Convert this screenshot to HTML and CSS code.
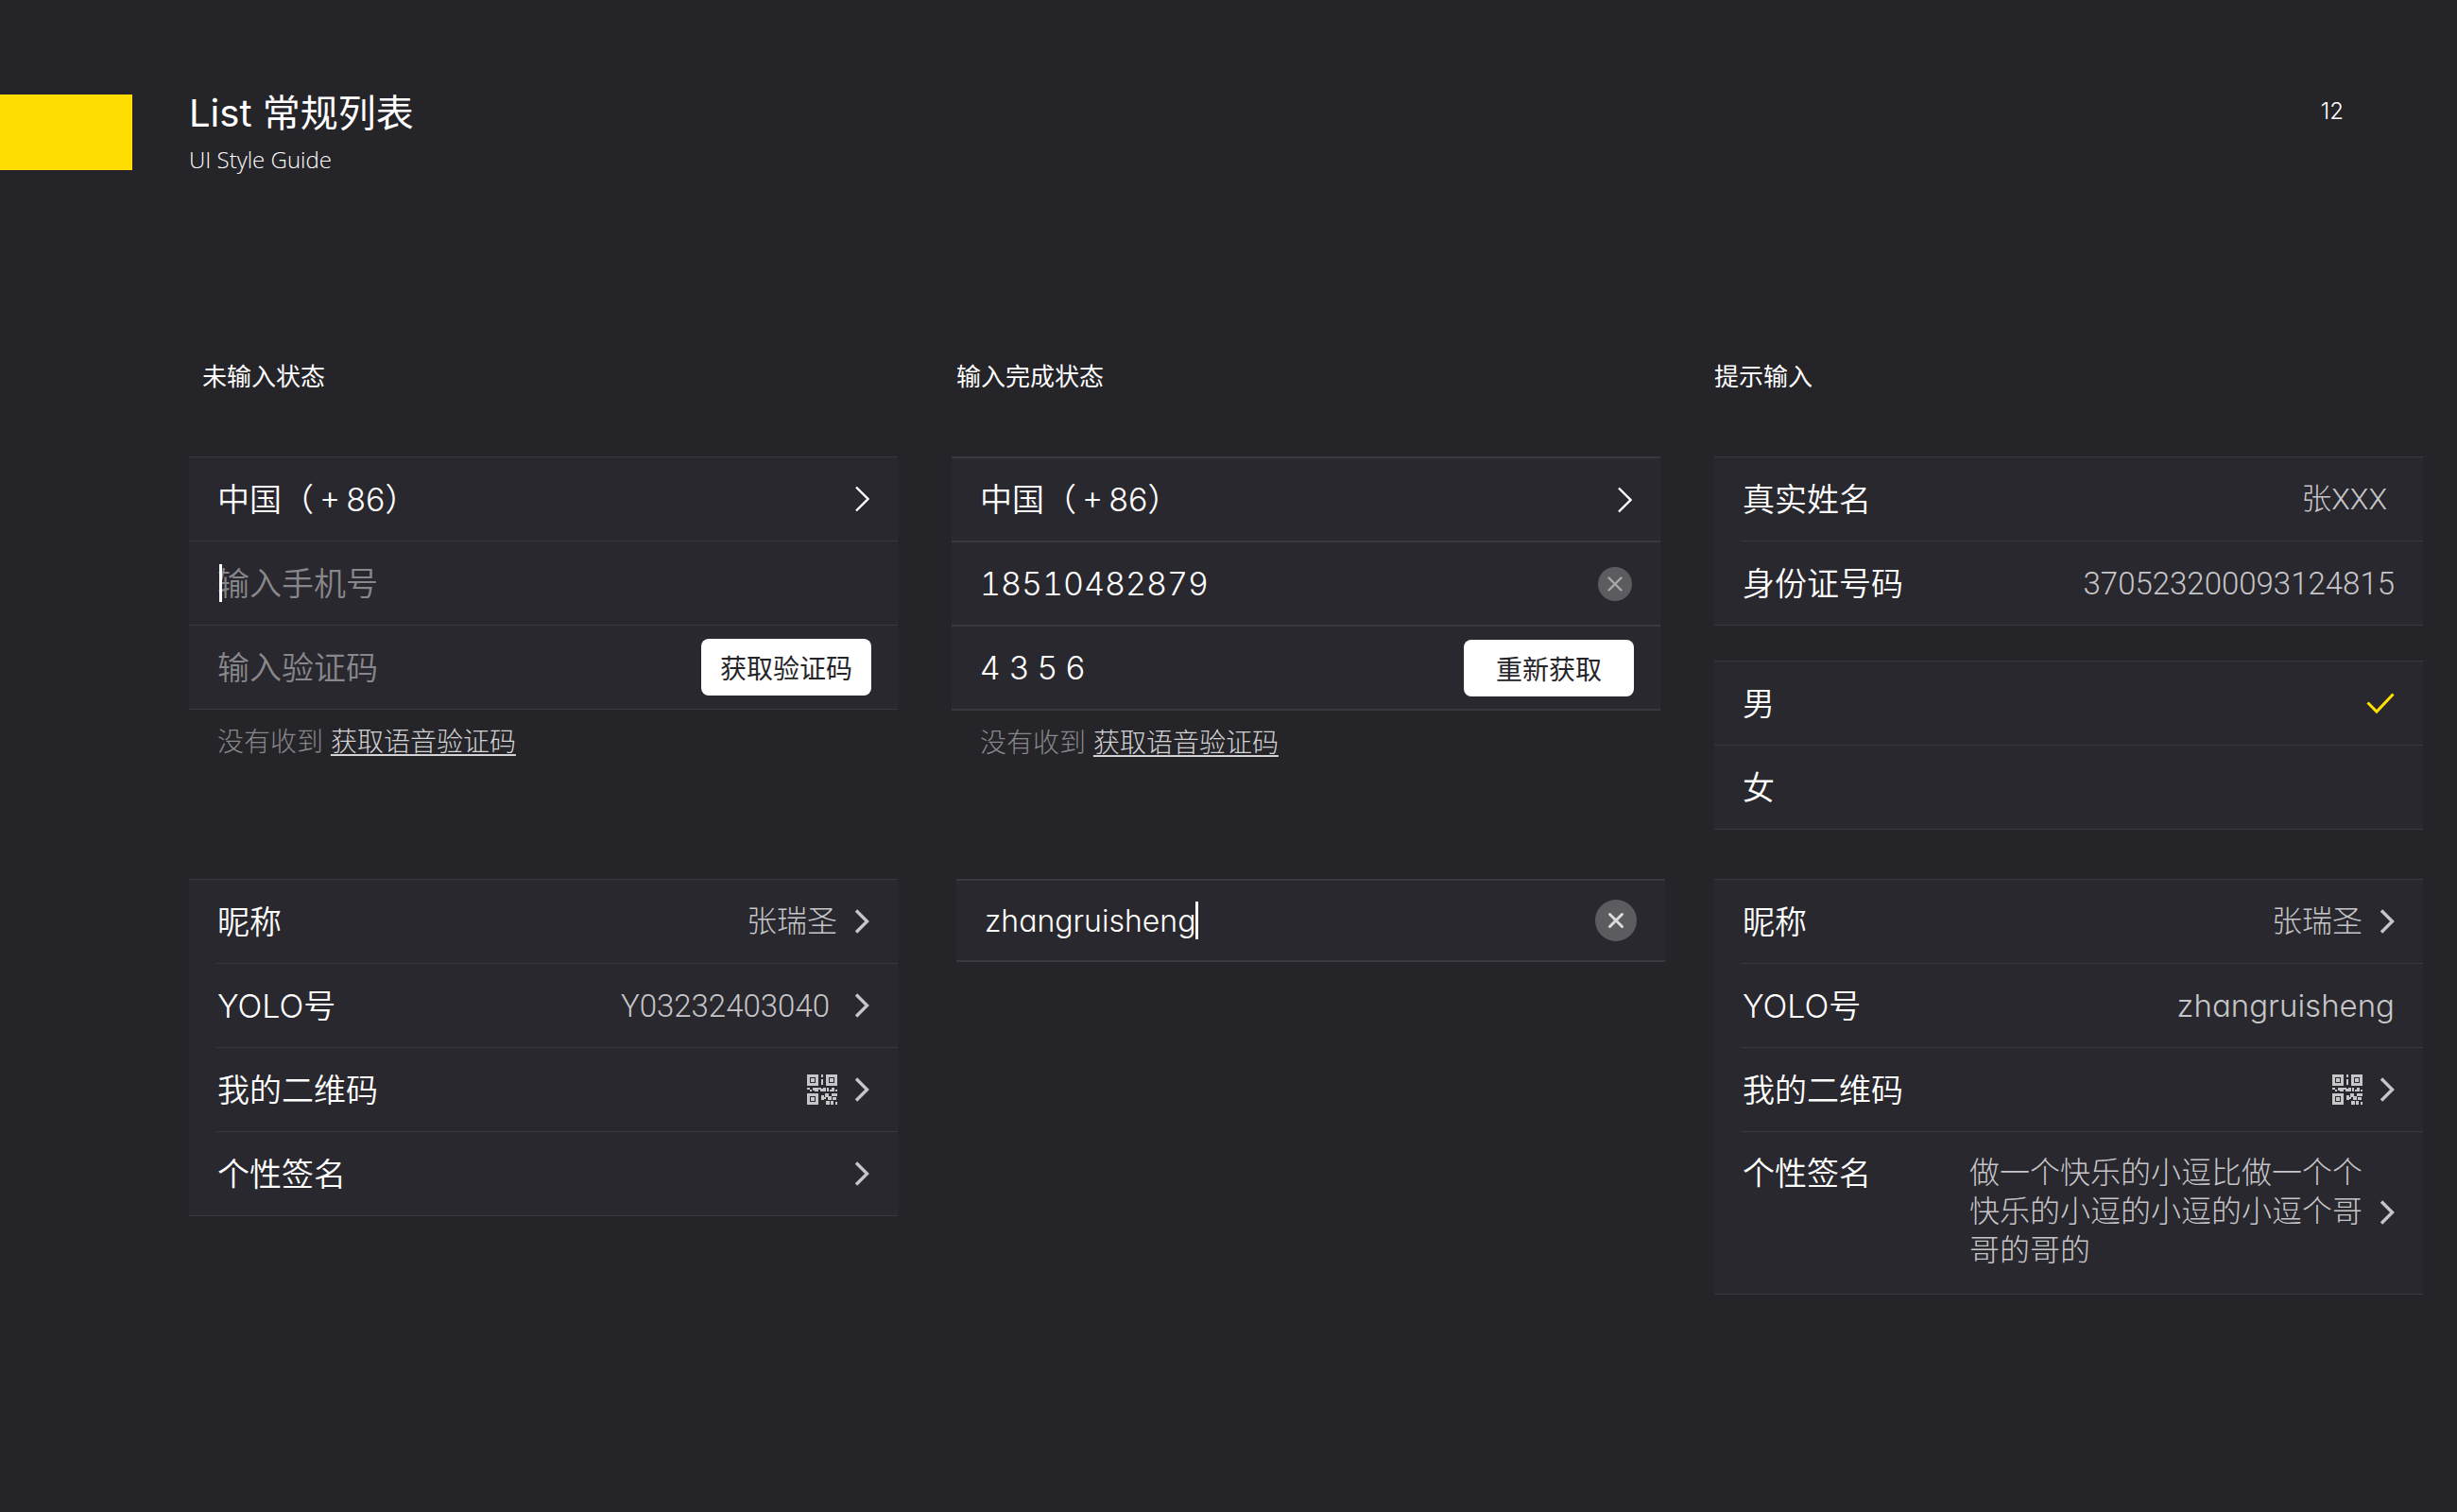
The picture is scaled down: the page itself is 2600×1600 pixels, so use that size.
FILE: index.html
```html
<!DOCTYPE html>
<html lang="zh-CN">
<head>
<meta charset="utf-8">
<meta name="viewport" content="width=device-width, initial-scale=1">
<title>List 常规列表</title>
<link rel="stylesheet" href="styles.css">
</head>
<body>
<svg class="defs" aria-hidden="true">
  <symbol id="chevron-thin" viewBox="0 0 16 28"><path d="M2 1.5 14.5 14 2 26.5" fill="none" stroke="currentColor" stroke-width="2.4"/></symbol>
  <symbol id="chevron" viewBox="0 0 16 28"><path d="M2 2.5 13.5 14 2 25.5" fill="none" stroke="currentColor" stroke-width="3.4"/></symbol>
  <symbol id="check" viewBox="0 0 30 28"><path d="M1.500 13.500 11 23 28.500 4.500" fill="none" stroke="currentColor" stroke-width="3"/></symbol>
  <symbol id="qr" viewBox="0 0 32 32">
    <path fill="currentColor" fill-rule="evenodd" d="M0 0h12v12H0zM3 3v6h6V3zM20 0h12v12H20zM23 3v6h6V3zM0 20h12v12H0zM3 23v6h6v-6z"/>
    <path fill="currentColor" d="M4 4h4v4H4zM24 4h4v4h-4zM4 24h4v4H4zM15 0h2v3h-2zM15 5h2v6h-2zM0 14h3v2H0zM3 16h2v2H3zM6 14h3v3H6zM8 14h4v4H8zM12 14h3v2h-3zM14 15h3v3h-3zM17 14h3v4h-3zM21 14h2v4h-2zM24 16h4v2h-4zM26 14h3v4h-3zM30 16h2v2h-2zM15 22h3v5h-3zM19 20h4v4h-4zM26 20h6v3h-6zM17 24h3v2h-3zM22 23h4v4h-4zM27 24h4v3h-4zM20 28h4v4h-4zM25 28h3v4h-3zM30 29h2v3h-2z"/>
  </symbol>
</svg>

<header class="page-header">
  <span class="mark"></span>
  <div class="titles">
    <h1>List 常规列表</h1>
    <p>UI Style Guide</p>
  </div>
  <span class="page-number">12</span>
</header>

<main class="board">
  <h2 class="heading-indent">未输入状态</h2>
  <h2 class="shifted">输入完成状态</h2>
  <h2>提示输入</h2>

  <section>
    <div class="list">
      <button class="row" type="button"><span class="label">中国（<span class="plus">+</span>86）</span><svg class="chevron bright"><use href="#chevron-thin"/></svg></button>
      <div class="row field"><span class="caret caret-start"></span><input type="tel" placeholder="输入手机号" aria-label="手机号"></div>
      <div class="row with-action"><input type="text" placeholder="输入验证码" aria-label="验证码"><button class="action" type="button">获取验证码</button></div>
    </div>
    <p class="hint">没有收到 <a href="#voice">获取语音验证码</a></p>
  </section>

  <section>
    <div class="list strong">
      <button class="row" type="button"><span class="label">中国（<span class="plus">+</span>86）</span><svg class="chevron bright"><use href="#chevron-thin"/></svg></button>
      <div class="row"><input class="phone" type="tel" value="18510482879" aria-label="手机号"><button class="clear" type="button" aria-label="清除"><svg viewBox="0 0 36 36"><circle cx="18" cy="18" r="18" fill="#5c5b60"/><path d="M11.500 11.500l13 13m0-13l-13 13" stroke="#a9a9ab" stroke-width="2.4" stroke-linecap="round" fill="none"/></svg></button></div>
      <div class="row with-action"><input type="text" value="4 3 5 6" aria-label="验证码"><button class="action" type="button">重新获取</button></div>
    </div>
    <p class="hint">没有收到 <a href="#voice-again">获取语音验证码</a></p>
  </section>

  <section class="stack">
    <dl class="list inset">
      <div class="row"><dt class="label">真实姓名</dt><dd class="value name">张XXX</dd></div>
      <div class="row"><dt class="label">身份证号码</dt><dd class="value digits">370523200093124815</dd></div>
    </dl>
    <div class="list" role="radiogroup" aria-label="性别">
      <label class="row"><span class="label">男</span><input class="choice" type="radio" name="gender" checked><svg class="check"><use href="#check"/></svg></label>
      <label class="row"><span class="label">女</span><input class="choice" type="radio" name="gender"><svg class="check"><use href="#check"/></svg></label>
    </div>
  </section>

  <section>
    <div class="list inset">
      <button class="row" type="button"><span class="label">昵称</span><span class="value">张瑞圣</span><svg class="chevron"><use href="#chevron"/></svg></button>
      <button class="row" type="button"><span class="label">YOLO号</span><span class="value digits code">Y03232403040</span><svg class="chevron"><use href="#chevron"/></svg></button>
      <button class="row" type="button"><span class="label">我的二维码</span><svg class="qr"><use href="#qr"/></svg><svg class="chevron"><use href="#chevron"/></svg></button>
      <button class="row" type="button"><span class="label">个性签名</span><svg class="chevron"><use href="#chevron"/></svg></button>
    </div>
  </section>

  <section>
    <div class="list strong compact shifted">
      <div class="row"><input class="nickname" type="text" value="zhangruisheng" aria-label="YOLO号"><span class="caret"></span><button class="clear large" type="button" aria-label="清除"><svg viewBox="0 0 44 44"><circle cx="22" cy="22" r="22" fill="#5c5b60"/><path d="M15.500 15.500l13 13m0-13l-13 13" stroke="#dcdcdd" stroke-width="3" stroke-linecap="round" fill="none"/></svg></button></div>
    </div>
  </section>

  <section>
    <div class="list inset">
      <button class="row" type="button"><span class="label">昵称</span><span class="value">张瑞圣</span><svg class="chevron"><use href="#chevron"/></svg></button>
      <div class="row"><span class="label">YOLO号</span><span class="value digits latin">zhangruisheng</span></div>
      <button class="row" type="button"><span class="label">我的二维码</span><svg class="qr"><use href="#qr"/></svg><svg class="chevron"><use href="#chevron"/></svg></button>
      <button class="row tall" type="button"><span class="label">个性签名</span><span class="value bio">做一个快乐的小逗比做一个个快乐的小逗的小逗的小逗个哥哥的哥的</span><svg class="chevron"><use href="#chevron"/></svg></button>
    </div>
  </section>
</main>
</body>
</html>
```
FILE: styles.css
```css
* {
  box-sizing: border-box;
}

:root {
  --bg: #252429;
  --panel: #29282e;
  --line: #3a393f;
  --text: #ffffff;
  --muted: #c6c6c8;
  --faint: #88878b;
  --sans: Inter, "Noto Sans CJK SC", sans-serif;
}

body {
  margin: 0;
  min-height: 100vh;
  background: var(--bg);
  color: var(--text);
  font-family: var(--sans);
  font-weight: 350;
  font-feature-settings: "cv11", "case";
}

h1, h2, p, dl, dd {
  margin: 0;
  font-weight: inherit;
}

button, input {
  margin: 0;
  padding: 0;
  border: 0;
  background: none;
  color: inherit;
  font: inherit;
  font-feature-settings: inherit;
  text-align: left;
  outline: 0;
}

.defs {
  position: absolute;
  width: 0;
  height: 0;
}

.page-header {
  display: flex;
  align-items: flex-start;
  gap: 60px;
  padding: 100px 120px 0 0;
}

.mark {
  width: 140px;
  height: 80px;
  background: #ffdd00;
}

.titles {
  flex: 1;
}

h1 {
  font-size: 40px;
  font-weight: 400;
  line-height: 40px;
}

.titles p {
  margin-top: 11px;
  font-family: "Open Sans", sans-serif;
  font-size: 24px;
  font-weight: 300;
  line-height: 36px;
}

.page-number {
  font-size: 24px;
  line-height: 36px;
}

.board {
  display: grid;
  grid-template-columns: repeat(3, minmax(0, 1fr));
  column-gap: 57px;
  padding: 194px 36px 100px 200px;
}

h2 {
  margin-bottom: 66px;
  font-size: 26px;
  font-weight: 400;
  line-height: 36px;
}

.heading-indent {
  padding-left: 14px;
}

.shifted {
  margin-left: 5px;
  margin-right: -5px;
}

section {
  margin-bottom: 52px;
}

.stack {
  display: flex;
  flex-direction: column;
  gap: 37px;
}

.list {
  border-top: 1px solid var(--line);
  background: var(--panel);
  font-size: 34px;
}

.row {
  position: relative;
  display: flex;
  align-items: center;
  width: 100%;
  min-height: 89px;
  padding: 0 30px;
  border-bottom: 1px solid var(--line);
}

.strong,
.strong .row {
  border-width: 2px;
  border-left: 0;
  border-right: 0;
}

.strong .row {
  border-top: 0;
}

.compact .row {
  min-height: 86px;
}

/* Dividers between rows start at the text edge */
.inset .row:not(:last-child) {
  border-image: linear-gradient(to right, transparent 30px, var(--line) 30px) 1;
}

.label {
  flex: 1;
  line-height: 41px;
}

.plus {
  margin: 0 6px;
}

.row input:not(.choice) {
  flex: 1;
  min-width: 0;
  height: 60px;
}

.phone {
  font-variant-numeric: tabular-nums;
}

input::placeholder {
  color: var(--faint);
  opacity: 1;
}

.caret {
  width: 3px;
  height: 40px;
  background: var(--text);
}

.caret-start {
  position: absolute;
  left: 32px;
  top: 24px;
}

.row .nickname.nickname {
  flex: none;
  width: auto;
  field-sizing: content;
  font-size: 32px;
}

.chevron {
  width: 16px;
  height: 28px;
  margin-left: 18px;
  color: var(--muted);
}

.bright {
  color: var(--text);
}

.value {
  color: var(--muted);
  font-family: Roboto, "Noto Sans CJK SC", sans-serif;
  font-size: 32px;
  font-weight: 300;
  line-height: 41px;
}

.digits {
  font-size: 33px;
}

.latin {
  font-family: var(--sans);
}

.code,
.name {
  padding-right: 8px;
}

.qr {
  width: 32px;
  height: 32px;
  color: var(--muted);
}

.tall {
  padding-top: 23px;
  padding-bottom: 25px;
}

.tall .label {
  align-self: flex-start;
}

.bio {
  width: 416px;
}

.with-action {
  padding-right: 28px;
}

.action {
  width: 180px;
  height: 60px;
  border-radius: 8px;
  background: #ffffff;
  color: #252429;
  font-size: 28px;
  font-weight: 400;
  text-align: center;
}

.clear {
  width: 36px;
  height: 36px;
  margin-left: auto;
}

.clear.large {
  width: 44px;
  height: 44px;
}

.clear svg {
  display: block;
}

.choice {
  appearance: none;
  width: 0;
  height: 0;
}

.check {
  display: none;
  width: 30px;
  height: 28px;
  color: #ffe100;
}

.choice:checked + .check {
  display: block;
}

.hint {
  padding: 14px 30px 0;
  color: var(--faint);
  font-size: 28px;
  font-weight: 300;
  line-height: 40px;
}

.hint a {
  color: #d4d4d6;
  text-underline-offset: 3px;
}
```
